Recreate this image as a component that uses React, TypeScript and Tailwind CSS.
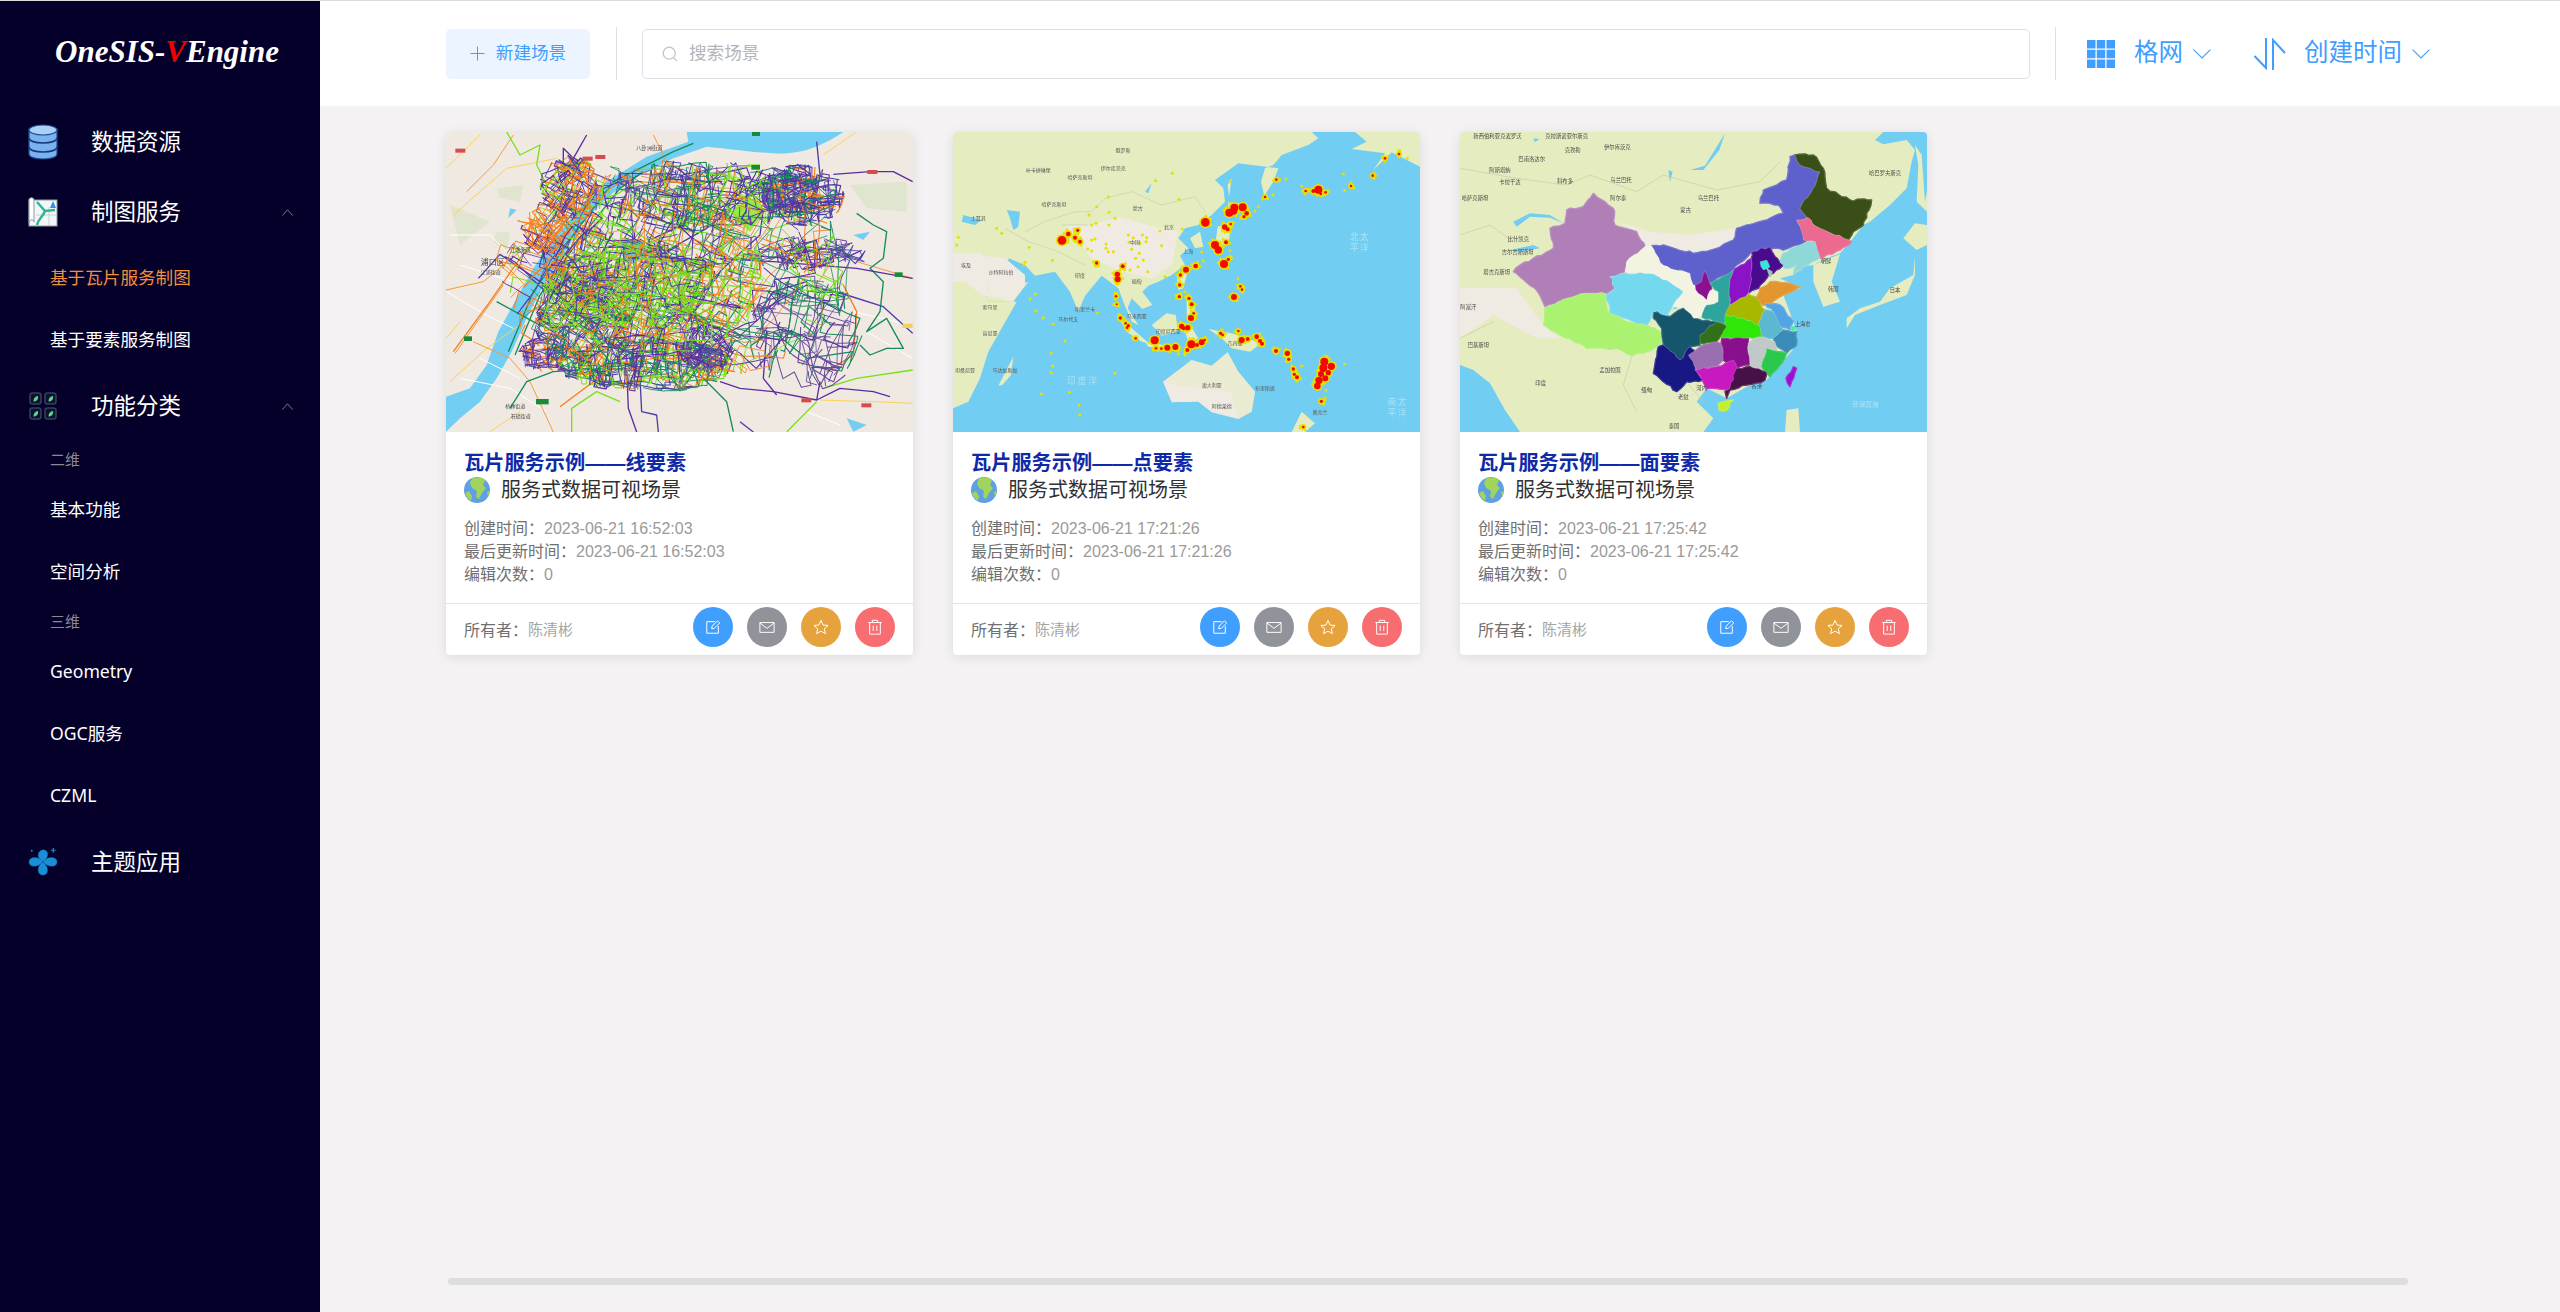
import type {ReactNode} from "react";

// seeded so the maps come out the same on every run
function makeRandom(seed: number) {
    let s = seed;
    return () => {
        s |= 0;
        s = (s + 0x6d2b79f5) | 0;
        let t = Math.imul(s ^ (s >>> 15), 1 | s);
        t = (t + Math.imul(t ^ (t >>> 7), 61 | t)) ^ t;
        return ((t ^ (t >>> 14)) >>> 0) / 4294967296;
    };
}

type Cluster = { cx: number; cy: number; rx: number; ry: number; n: number; colors: string[]; angle: number; step: number };

const PURPLE = "#5a2ca0";
const INDIGO = "#4a3da8";
const ORANGE = "#f57f1f";
const LIME = "#78e01a";
const GREEN = "#178a5c";
const SLATE = "#6a4a9c";

const clusters: Cluster[] = [
    {cx: 1100, cy: 620, rx: 170, ry: 170, n: 44, colors: [PURPLE, SLATE, SLATE, SLATE, GREEN], angle: 0.2, step: 46},
    {cx: 1110, cy: 390, rx: 170, ry: 55, n: 24, colors: [INDIGO, SLATE, PURPLE], angle: -0.12, step: 50},
    {cx: 700, cy: 440, rx: 520, ry: 320, n: 180, colors: [INDIGO, PURPLE, GREEN, ORANGE, LIME], angle: 0.45, step: 60},
    {cx: 800, cy: 210, rx: 360, ry: 95, n: 120, colors: [INDIGO, PURPLE, ORANGE, LIME, GREEN], angle: 0.08, step: 34},
    {cx: 1090, cy: 210, rx: 120, ry: 90, n: 70, colors: [INDIGO, PURPLE, INDIGO, GREEN, ORANGE], angle: 0, step: 28},
    {cx: 390, cy: 190, rx: 90, ry: 95, n: 60, colors: [PURPLE, ORANGE, INDIGO, LIME], angle: 0.5, step: 28},
    {cx: 320, cy: 320, rx: 75, ry: 75, n: 30, colors: [ORANGE, ORANGE, PURPLE], angle: 0.7, step: 30},
    {cx: 620, cy: 720, rx: 260, ry: 80, n: 120, colors: [ORANGE, PURPLE, INDIGO, GREEN, LIME], angle: 0, step: 30},
    {cx: 310, cy: 690, rx: 75, ry: 50, n: 30, colors: [PURPLE, ORANGE, INDIGO], angle: 0, step: 22},
    {cx: 800, cy: 670, rx: 80, ry: 70, n: 36, colors: [INDIGO, PURPLE, SLATE], angle: 0.6, step: 22},
    {cx: 430, cy: 580, rx: 140, ry: 180, n: 120, colors: [INDIGO, PURPLE, ORANGE, LIME, GREEN], angle: 0.75, step: 26},
    {cx: 650, cy: 450, rx: 320, ry: 230, n: 190, colors: [LIME, LIME, ORANGE, ORANGE, PURPLE, INDIGO, GREEN], angle: 0.3, step: 36},
    {cx: 620, cy: 480, rx: 220, ry: 130, n: 110, colors: [LIME, LIME, LIME, ORANGE, INDIGO], angle: 0.1, step: 24},
];

function buildLines() {
    const rand = makeRandom(42);
    const lines: { d: string; color: string; width: number }[] = [];
    clusters.forEach((c) => {
        for (let i = 0; i < c.n; i++) {
            const a = rand() * Math.PI * 2;
            const r = Math.sqrt(rand());
            let x = c.cx + Math.cos(a) * r * c.rx;
            let y = c.cy + Math.sin(a) * r * c.ry;
            let heading = c.angle + Math.floor(rand() * 4) * (Math.PI / 2);
            let d = `M${x.toFixed(0)},${y.toFixed(0)}`;
            const steps = 5 + Math.floor(rand() * 10);
            for (let j = 0; j < steps; j++) {
                if (rand() < 0.3) heading += (rand() < 0.5 ? 1 : -1) * (Math.PI / 2);
                heading += (rand() - 0.5) * 0.5;
                const len = 8 + rand() * c.step;
                const nx = x + Math.cos(heading) * len;
                const ny = y + Math.sin(heading) * len;
                const ex = (nx - c.cx) / c.rx;
                const ey = (ny - c.cy) / c.ry;
                if (ex * ex + ey * ey > 1.1) {
                    heading += Math.PI;
                    continue;
                }
                x = nx;
                y = ny;
                d += ` L${x.toFixed(0)},${y.toFixed(0)}`;
            }
            lines.push({d, color: c.colors[Math.floor(rand() * c.colors.length)], width: 2.2 + rand() * 1.4});
        }
    });
    return lines;
}

const busLines = buildLines();

const longLines: [string, string][] = [
    ["M115,460 L180,388 L330,490 L420,560", INDIGO],
    ["M1180,148 L1290,140 L1360,140 L1418,170", PURPLE],
    ["M1250,265 L1300,300 L1340,320 L1330,400 L1290,430 L1330,470 L1320,560 L1280,620 L1340,580 L1390,670 L1340,670 L1290,690 L1260,660", GREEN],
    ["M205,680 L280,500 L400,330 L520,170 L700,80 L760,55", GREEN],
    ["M225,690 L300,510 L420,340 L540,190 L610,140", GREEN],
    ["M170,530 L280,590 L340,620", GREEN],
    ["M40,680 L150,530 L240,400 L300,330", ORANGE],
    ["M360,845 L460,770 L560,690 L720,600 L900,500", ORANGE],
    ["M210,850 L260,770 L340,740 L500,730", GREEN],
    ["M560,730 L565,850 L590,921", PURPLE],
    ["M600,760 L605,860 L650,870 L655,921", INDIGO],
    ["M840,770 L900,790 L1000,800 L1130,825 L1140,770", PURPLE],
    ["M1130,825 L1200,790 L1300,800 L1350,815", PURPLE],
    ["M1150,790 L1250,760 L1418,735", LIME],
    ["M1040,921 L1130,830", LIME],
    ["M960,560 L1100,480 L1220,510 L1330,545 L1418,625", INDIGO],
    ["M840,400 L1000,410 L1250,430 L1418,460", PURPLE],
    ["M640,400 L800,310 L960,180 L1110,150", INDIGO],
    ["M640,340 L900,220 L1130,160", PURPLE],
    ["M970,250 L960,330 L850,430 L700,590 L520,720", INDIGO],
    ["M880,920 L860,830 L790,760 L710,670", GREEN],
    ["M900,890 L940,921", INDIGO],
    ["M440,30 L400,100 L370,70 L370,130", PURPLE],
    ["M200,21 L240,90 L300,60 L290,120 L320,180", LIME],
    ["M1130,50 L1140,150 L1120,260", INDIGO],
    ["M395,921 L395,850 L470,800 L540,830", LIME],
    ["M980,620 L970,760 L1010,810", PURPLE],
    ["M1160,740 L1240,690 L1250,560 L1210,480", ORANGE],
    ["M960,560 L1000,500 L1100,470", PURPLE],
    ["M1000,620 L1100,700 L1240,680", GREEN],
];

const heatBig: [number, number, number][] = [
    [351, 346, 12], [370, 327, 6], [398, 316, 4], [390, 338, 5], [405, 350, 5], [517, 448, 7], [518, 463, 8], [533, 424, 5],
    [455, 414, 4], [781, 292, 12], [853, 263, 11], [868, 248, 11], [866, 258, 10], [893, 247, 11], [905, 265, 6], [897, 275, 4],
    [839, 306, 7], [848, 313, 5], [857, 297, 3], [843, 352, 5], [810, 360, 11], [820, 375, 10], [837, 417, 11], [850, 403, 4],
    [723, 434, 8], [752, 423, 6], [706, 450, 4], [704, 480, 4], [703, 515, 4], [732, 520, 4], [740, 538, 5], [738, 579, 8],
    [746, 565, 3], [710, 604, 7], [728, 608, 7], [716, 610, 5], [867, 516, 8], [886, 484, 3], [891, 494, 3], [526, 579, 4],
    [542, 595, 3], [550, 602, 4], [546, 608, 3], [572, 640, 3], [629, 646, 11], [667, 668, 8], [691, 666, 8], [649, 671, 3],
    [633, 670, 3], [727, 675, 5], [739, 658, 11], [756, 660, 5], [770, 652, 8], [779, 645, 3], [827, 625, 4], [833, 630, 3],
    [880, 618, 3], [890, 645, 8], [908, 642, 5], [935, 635, 6], [945, 648, 5], [951, 656, 5], [993, 678, 5], [1027, 685, 7],
    [1031, 703, 4], [1045, 732, 4], [1048, 748, 4], [1056, 757, 5], [1138, 710, 11], [1135, 729, 11], [1159, 724, 10], [1128, 747, 8],
    [1150, 743, 7], [1141, 760, 8], [1122, 766, 10], [1117, 783, 9], [1129, 829, 4], [1120, 194, 11], [1105, 198, 5], [1082, 198, 3],
    [1127, 207, 3], [1142, 202, 3], [1283, 152, 3], [1218, 183, 3], [1320, 100, 3], [1362, 87, 3], [994, 164, 3], [960, 216, 3],
    [513, 514, 3], [515, 538, 2], [1075, 906, 3],
];

const heatSmall: [number, number][] = [
    [682, 145], [632, 167], [855, 170], [1023, 162], [1070, 183], [1195, 147], [1199, 196], [1387, 100], [940, 245], [984, 210],
    [490, 216], [455, 245], [432, 270], [492, 262], [510, 280], [440, 300], [453, 295], [492, 300], [550, 330], [565, 338], [592, 330],
    [605, 338], [552, 352], [603, 350], [585, 355], [483, 357], [440, 345], [450, 342], [428, 372], [440, 378], [483, 370], [505, 380],
    [490, 380], [560, 373], [572, 400], [583, 385], [595, 405], [579, 425], [555, 435], [608, 440], [525, 435], [660, 455], [650, 362],
    [645, 318], [702, 223], [712, 312], [252, 367], [240, 412], [236, 420], [155, 310], [170, 325], [40, 337], [35, 360], [322, 406],
    [271, 507], [255, 522], [272, 558], [295, 578], [325, 597], [360, 648], [319, 684], [323, 723], [319, 743], [510, 745], [289, 807],
    [374, 802], [402, 841], [404, 870], [458, 563], [720, 500], [700, 687], [720, 690], [1199, 718], [1070, 723], [1143, 796], [1141, 818],
    [879, 462], [855, 377], [775, 408], [770, 380], [930, 258],
];

function buildHalo() {
    const rand = makeRandom(7);
    const dots: [number, number][] = [];
    heatBig.forEach(([x, y, r]) => {
        for (let i = 0; i < 3; i++) {
            const a = rand() * Math.PI * 2;
            dots.push([x + Math.cos(a) * (r + 7), y + Math.sin(a) * (r + 7)]);
        }
    });
    return dots;
}

const heatHalo = buildHalo();

const mapTwoLabels: [number, number, string][] = [
    [534, 80, "俄罗斯"], [280, 140, "叶卡捷琳堡"], [505, 135, "伊尔库茨克"], [405, 162, "哈萨克斯坦"], [327, 243, "哈萨克斯坦"],
    [578, 256, "蒙古"], [570, 356, "中国"], [672, 312, "北京"], [730, 385, "上海"], [405, 457, "印度"], [63, 425, "埃及"],
    [168, 448, "沙特阿拉伯"], [575, 473, "缅甸"], [420, 558, "斯里兰卡"], [370, 587, "马尔代夫"], [575, 578, "马来西亚"],
    [670, 625, "印度尼西亚"], [870, 660, "几内亚"], [800, 786, "澳大利亚"], [960, 794, "布里斯班"], [830, 850, "阿德莱德"],
    [1125, 868, "奥克兰"], [135, 552, "索马里"], [180, 740, "马达加斯加"], [60, 740, "坦桑尼亚"], [135, 630, "肯尼亚"], [100, 285, "土耳其"],
];

const provinces: [string, string][] = [
    ["#b07fb8", "430,205 490,250 495,300 560,320 585,365 530,410 525,440 480,455 495,490 470,505 410,505 350,520 285,545 255,490 190,440 210,420 310,370 300,310 345,295 350,255 400,245"],
    ["#aaf26f", "285,550 350,520 410,505 465,505 470,555 530,590 590,600 630,620 635,655 590,680 540,690 500,670 410,670 330,630 280,600"],
    ["#74d9ee", "480,455 525,445 600,445 650,465 700,500 690,545 665,550 650,580 620,555 590,600 540,585 480,565 470,510 495,490"],
    ["#f3f3e2", "585,365 605,362 640,420 720,445 735,480 770,490 805,500 805,530 770,540 755,575 730,580 700,545 665,550 700,500 650,465 600,445 525,440 530,410"],
    ["#5e60cc", "605,362 640,360 730,385 800,370 850,345 860,310 950,285 1000,265 985,240 930,235 940,195 1010,165 1020,95 1035,90 1050,120 1110,140 1090,190 1050,250 1070,280 1040,285 1070,350 1000,375 970,370 905,380 850,435 790,470 730,480 720,445 640,420"],
    ["#3a4f17", "1035,90 1090,90 1120,130 1130,190 1200,225 1265,225 1240,300 1210,320 1195,345 1100,305 1070,275 1050,250 1090,190 1110,140 1050,120"],
    ["#ec6a90", "1040,285 1075,278 1100,305 1195,345 1205,350 1170,375 1110,400 1095,350 1060,345"],
    ["#8ed8d8", "1000,385 1070,350 1095,350 1108,400 1060,425 1030,450 1040,420 1005,430 990,410"],
    ["#4a0a8e", "905,380 960,365 975,395 1000,420 970,445 950,460 925,490 895,505 905,430"],
    ["#8b12c6", "850,435 905,400 905,430 895,505 840,540 838,480"],
    ["#8b1190", "765,437 785,490 770,525 745,505 735,480 755,470"],
    ["#2da49c", "850,435 838,480 838,540 848,570 820,595 755,575 770,540 805,530 805,500 780,475"],
    ["#e39530", "960,470 1020,475 1050,485 1000,510 950,540 915,535 930,490"],
    ["#a8b800", "895,505 915,515 945,555 925,600 880,580 825,570 840,540"],
    ["#52a4e4", "945,535 990,540 1030,590 1020,615 985,600 970,560"],
    ["#5cb8d0", "945,555 970,560 1000,615 970,640 930,630 925,600"],
    ["#3a8cb8", "1000,615 1040,620 1040,660 1010,685 975,660 970,640"],
    ["#30e608", "825,570 880,580 925,600 935,635 870,640 820,640 800,620 830,605"],
    ["#2f7019", "800,590 830,605 800,650 750,655 750,630"],
    ["#16566c", "610,560 660,575 700,550 730,580 800,590 750,630 750,660 720,665 690,705 640,660 635,610 610,580"],
    ["#181884", "625,665 640,660 690,705 720,665 745,690 735,735 760,765 710,770 680,800 640,770 610,745"],
    ["#9a6eb0", "715,690 750,665 790,650 815,660 820,705 800,725 740,735"],
    ["#88108c", "815,640 895,640 900,720 860,730 820,705"],
    ["#c0c8c8", "895,655 925,635 975,650 980,670 940,700 930,740 900,720"],
    ["#2cc84e", "950,670 1010,685 990,720 960,755 935,725"],
    ["#c818c0", "735,735 800,725 850,705 865,740 840,795 770,790 750,750"],
    ["#481048", "860,730 900,725 950,740 945,765 890,780 840,795 830,820 825,800 840,790"],
    ["#2fe8d8", "930,410 950,405 960,425 940,435"],
    ["#90c8a8", "950,430 968,440 960,455"],
    ["#4ae8a8", "1020,605 1038,605 1030,620"],
    ["#c0f030", "805,835 850,825 830,855 808,855"],
    ["#9a10d0", "1030,725 1040,730 1020,785 1008,760"],
];

// jagged borders: the offset depends only on the place, so neighbours keep a shared edge
function jag(points: string) {
    const pts = points.split(" ").map((p) => p.split(",").map(Number));
    const out: string[] = [];
    pts.forEach(([x, y], i) => {
        const [nx, ny] = pts[(i + 1) % pts.length];
        const len = Math.hypot(nx - x, ny - y);
        const parts = Math.max(1, Math.round(len / 14));
        for (let k = 0; k < parts; k++) {
            const px = x + ((nx - x) * k) / parts;
            const py = y + ((ny - y) * k) / parts;
            const h = Math.sin(px * 12.9898 + py * 78.233) * 43758.5453;
            const h2 = Math.sin(px * 39.346 + py * 11.135) * 24634.6345;
            const dx = k === 0 ? 0 : ((h - Math.floor(h)) - 0.5) * 7;
            const dy = k === 0 ? 0 : ((h2 - Math.floor(h2)) - 0.5) * 7;
            out.push(`${(px + dx).toFixed(1)},${(py + dy).toFixed(1)}`);
        }
    });
    return out.join(" ");
}

const mapThreeLabels: [number, number, string][] = [
    [110, 40, "新西伯利亚"], [183, 40, "克麦罗沃"], [350, 40, "克拉斯诺亚尔斯克"], [368, 82, "克孜勒"], [502, 72, "伊尔库茨克"],
    [150, 140, "阿斯塔纳"], [245, 108, "巴甫洛达尔"], [180, 177, "卡拉干达"], [345, 173, "科布多"], [513, 172, "乌兰巴托"],
    [75, 225, "哈萨克斯坦"], [505, 225, "阿尔泰"], [775, 225, "乌兰巴托"], [707, 260, "蒙古"], [205, 348, "比什凯克"],
    [203, 387, "吉尔吉斯斯坦"], [140, 447, "塔吉克斯坦"], [55, 553, "阿富汗"], [85, 666, "巴基斯坦"], [272, 780, "印度"],
    [480, 740, "孟加拉国"], [590, 800, "缅甸"], [700, 822, "老挝"], [672, 908, "泰国"], [1335, 500, "日本"], [1150, 497, "韩国"],
    [1128, 413, "朝鲜"], [1058, 602, "上海市"], [1305, 150, "哈巴罗夫斯克"], [920, 790, "香港"], [755, 795, "河内"],
];

function MapFrame({viewBox, bg, children}: { viewBox: string; bg: string; children: ReactNode }) {
    return (
        <svg viewBox={viewBox} preserveAspectRatio="none" className="block w-full h-full blur-[0.5px]" style={{background: bg}}>
            {children}
        </svg>
    );
}

function MapOne() {
    return (
        <MapFrame viewBox="18 21 1401 900" bg="#efe9e2">
            <path d="M170,190 L250,180 L240,230 L180,220 Z M30,240 L150,290 L60,360 Z M1230,180 L1400,170 L1400,260 L1280,250 Z M170,320 L210,320 L200,380 L160,350 Z" fill="#dfe5cf"/>
            <path d="M740,21 L1210,21 C1150,60 1090,90 1000,85 C920,80 860,70 800,65 L700,100 L600,150 L510,210 L430,290 L370,390 L300,500 L260,580 L215,680 L170,760 L120,830 L60,880 L18,920 L18,815 L90,790 L140,720 L175,620 L230,520 L280,430 L340,340 L420,250 L500,170 L620,95 L745,50 Z" fill="#72cef2"/>
            <path d="M540,340 L600,345 L610,400 L570,420 L545,390 Z M1240,330 L1290,320 L1270,345 Z M480,480 L500,490 L490,520 Z M1220,880 L1280,900 L1240,920 Z M210,250 L230,255 L205,280 Z" fill="#72cef2"/>
            <g fill="none" stroke="#fff" strokeWidth="3">
                <path d="M30,330 L150,330 L220,400 M20,500 L120,560 L220,610 M60,760 L210,790 L320,860 M1240,560 L1410,600 M1280,620 L1418,700 M1100,860 L1200,900 M60,420 L220,470 M120,700 L240,760"/>
            </g>
            <g fill="none" stroke="#f9d35b" strokeWidth="3">
                <path d="M18,130 L120,30 M40,270 L200,130 L350,100 M18,640 L60,590 M30,770 L140,670 L240,600 M1140,825 L1300,830 L1418,835 M150,920 L240,860 M1150,90 L1250,20"/>
            </g>
            <g fill="none" stroke="#f79a3c" strokeWidth="3">
                <path d="M18,495 L130,470 L240,380 M45,685 L190,480 M100,650 L210,700 L270,770 L340,921 M80,200 L160,120 L220,30 M640,30 L690,130 M1250,410 L1418,460"/>
            </g>
            <path d="M880,250 L950,215 L975,260 L930,320 L880,280 Z" fill="#86e61a" opacity="0.75"/>
            {longLines.map(([d, color], i) => (
                <path key={i} d={d} fill="none" stroke={color} strokeWidth="4" strokeLinejoin="round"/>
            ))}
            {busLines.map((l, i) => (
                <path key={i} d={l.d} fill="none" stroke={l.color} strokeWidth={l.width} strokeLinejoin="round"/>
            ))}
            <g fill="#444" fontFamily="'Noto Sans CJK SC',sans-serif">
                <text x="122" y="420" fontSize="24">浦口区</text>
                <text x="210" y="380" fontSize="16">江北新区</text>
                <text x="588" y="76" fontSize="16">八卦洲街道</text>
                <text x="122" y="446" fontSize="15">江浦街道</text>
                <text x="196" y="850" fontSize="15">桥林街道</text>
                <text x="212" y="880" fontSize="15">石碛街道</text>
            </g>
            <g fill="#d94a50">
                <rect x="46" y="71" width="30" height="12"/><rect x="428" y="95" width="30" height="12"/><rect x="466" y="90" width="30" height="12"/>
                <rect x="1282" y="135" width="30" height="12"/><rect x="1084" y="820" width="30" height="12"/><rect x="1264" y="835" width="30" height="12"/>
            </g>
            <g fill="#198a3a">
                <rect x="936" y="21" width="24" height="12"/><rect x="934" y="120" width="26" height="14"/><rect x="72" y="634" width="24" height="14"/>
                <rect x="288" y="822" width="38" height="16"/><rect x="1364" y="442" width="24" height="14"/>
            </g>
            <rect x="1388" y="596" width="30" height="13" fill="#efd25a"/>
        </MapFrame>
    );
}

function MapTwo() {
    return (
        <MapFrame viewBox="24 21 1401 900" bg="#72cdf2">
            <polygon points="24,21 1100,21 1120,40 1090,60 1010,90 985,120 960,130 948,170 958,212 985,170 1000,130 880,115 810,165 835,190 840,230 800,270 760,300 720,310 700,340 730,370 705,392 720,420 680,450 640,470 610,482 592,500 622,540 592,552 560,520 548,550 580,600 560,590 535,530 520,490 470,452 420,512 400,560 375,500 330,440 270,452 240,420 192,400 172,440 222,480 250,470 205,530 130,530 80,400 24,390" fill="#e5ecc0"/>
            <polygon points="24,400 80,400 130,530 215,530 130,680 105,760 70,830 24,850" fill="#e5ecc0"/>
            <polygon points="1230,21 1425,21 1425,125 1340,82 1285,135 1320,85 1220,72 1265,50" fill="#e5ecc0"/>
            <polygon points="440,300 520,275 630,305 700,320 680,420 620,460 530,440 440,400 360,300" fill="#efeae2"/>
            <polygon points="24,385 110,385 130,500 215,490 170,520 110,510 60,470 24,470" fill="#efeae2"/>
            <polygon points="90,390 180,400 240,450 240,480 200,530 140,510" fill="#efeae2"/>
            <polygon points="654,770 740,705 800,722 848,682 880,740 930,800 920,860 880,882 800,862 760,830 680,832" fill="#efeae2"/>
            <path d="M654,770 L740,705 L800,722 L848,682 L880,740 L930,800 L920,860 L880,882 L860,800 L700,780 Z" fill="#e5ecc0" opacity="0.5"/>
            <g fill="#e5ecc0">
                <polygon points="160,782 205,695 198,750 172,780"/>
                <polygon points="620,600 665,565 692,570 700,620 650,632"/>
                <polygon points="520,575 560,610 612,655 590,650 545,620"/>
                <polygon points="600,650 700,668 700,676 610,665"/>
                <polygon points="700,612 735,600 760,640 730,650 722,625"/>
                <polygon points="790,612 860,625 950,655 915,680 860,670 830,640"/>
                <polygon points="735,340 765,320 775,365 750,370"/>
                <polygon points="818,305 860,290 850,360 810,362"/>
                <polygon points="850,230 890,240 870,265 850,260"/>
                <polygon points="695,450 730,430 715,490 700,495"/>
                <polygon points="725,520 750,540 745,590 725,570"/>
                <polygon points="1070,860 1110,895 1080,921 1040,921"/>
                <polygon points="860,160 852,215 848,180"/>
            </g>
            <polygon points="55,270 110,285 90,300 50,290" fill="#72cdf2"/>
            <polygon points="185,255 225,260 220,305 205,315 195,280" fill="#72cdf2"/>
            <polygon points="600,200 620,175 610,205" fill="#72cdf2"/>
            <g fill="none" stroke="#c9cfb0" strokeWidth="2">
                <path d="M240,320 L300,290 L390,260 L440,260 L480,220 L560,200 L650,240 L750,215 L780,260 M180,310 L250,350 L340,380 L420,420 M350,300 L430,300"/>
            </g>
            {heatSmall.map(([x, y], i) => (
                <circle key={i} cx={x} cy={y} r="4.5" fill="#e6e000"/>
            ))}
            {heatHalo.map(([x, y], i) => (
                <circle key={i} cx={x} cy={y} r="4" fill="#e6e000"/>
            ))}
            {heatBig.map(([x, y, r], i) => (
                <circle key={i} cx={x} cy={y} r={r + 6} fill="#e6e000"/>
            ))}
            {heatBig.map(([x, y, r], i) => (
                <circle key={i} cx={x} cy={y} r={r + 1} fill="#f20a00"/>
            ))}
            <g fontSize="15" fill="#555" fontFamily="'Noto Sans CJK SC',sans-serif" textAnchor="middle">
                {mapTwoLabels.map(([x, y, t]) => (
                    <text key={t + x} x={x} y={y}>{t}</text>
                ))}
            </g>
            <g fontSize="26" fill="#a9e2f5" fontFamily="'Noto Sans CJK SC',sans-serif" textAnchor="middle">
                <text x="414" y="778" letterSpacing="6">印度洋</text>
                <text x="1245" y="344" letterSpacing="4">北太</text>
                <text x="1245" y="378" letterSpacing="4">平洋</text>
                <text x="1358" y="840" letterSpacing="4">南太</text>
                <text x="1358" y="874" letterSpacing="4">平洋</text>
            </g>
        </MapFrame>
    );
}

function MapThree() {
    return (
        <MapFrame viewBox="30 21 1401 900" bg="#e5ecc0">
            <polygon points="1431,21 1300,21 1275,45 1300,58 1370,45 1395,75 1385,110 1370,190 1320,240 1260,290 1240,300 1205,345 1170,385 1130,400 1090,420 1060,425 1030,450 990,460 1050,490 1000,510 1030,590 1040,620 1040,660 990,720 950,765 890,785 830,820 770,790 740,830 790,880 760,921 1431,921" fill="#72cdf2"/>
            <polygon points="1090,420 1140,400 1170,388 1145,470 1170,530 1120,545 1090,470" fill="#e5ecc0"/>
            <polygon points="1431,300 1395,295 1360,340 1400,375 1431,360" fill="#e5ecc0"/>
            <polygon points="1395,60 1415,90 1425,230 1431,200 1431,260 1400,230 1405,120" fill="#e5ecc0"/>
            <polygon points="1395,395 1390,450 1320,490 1290,530 1230,550 1190,580 1190,610 1215,570 1290,540 1370,510 1395,450" fill="#e5ecc0"/>
            <polygon points="1010,855 1045,850 1050,921 1005,921" fill="#e5ecc0"/>
            <polygon points="30,720 70,735 120,775 165,855 210,921 30,921" fill="#72cdf2"/>
            <polygon points="490,285 600,320 720,330 850,310 860,345 800,370 730,385 640,360 585,365 560,320" fill="#efeae2"/>
            <polygon points="30,490 200,490 280,600 330,640 260,640 130,570 30,640" fill="#efeae2"/>
            <g fill="#72cdf2">
                <path d="M190,290 L240,265 L300,270 L340,295 L300,278 L240,275 L200,305 Z"/>
                <path d="M720,135 L765,122 L825,25 L808,75 L760,135 Z"/>
                <path d="M180,375 L250,360 L270,370 L210,380 Z"/>
                <path d="M655,135 L668,140 L660,170 Z M250,40 L268,42 L255,52 Z"/>
            </g>
            <g fill="none" stroke="#c5cca4" strokeWidth="2">
                <path d="M30,130 L200,160 L350,180 L420,150 L560,200 L640,150 L800,195 L930,170 L990,110 M30,330 L120,300 L190,350 M550,680 L520,780 L560,860 M700,760 L760,830 M30,640 L130,590"/>
            </g>
            {provinces.map(([fill, points]) => (
                <polygon key={`base${points}`} points={jag(points)} fill={fill} stroke={fill} strokeWidth="4" strokeLinejoin="round"/>
            ))}
            {provinces.map(([fill, points]) => (
                <polygon key={points} points={jag(points)} fill={fill} stroke="#f2f2ea" strokeOpacity="0.6" strokeWidth="1"/>
            ))}
            <g fontSize="16" fill="#444" fontFamily="'Noto Sans CJK SC',sans-serif" textAnchor="middle">
                {mapThreeLabels.map(([x, y, t]) => (
                    <text key={t + x} x={x} y={y}>{t}</text>
                ))}
            </g>
            <text x="1246" y="846" fontSize="20" fill="#a9e2f5" textAnchor="middle" fontFamily="'Noto Sans CJK SC',sans-serif">菲律宾海</text>
        </MapFrame>
    );
}

function DbIcon() {
    return (
        <svg viewBox="0 0 30 36" className="w-[30px] h-[36px]">
            <path d="M1,5 V30 C1,33 7,35 15,35 C23,35 29,33 29,30 V5 Z" fill="#79b2ee" stroke="#1f4a8c" strokeWidth="1.2"/>
            <ellipse cx="15" cy="6" rx="14" ry="5" fill="#a9d0f7" stroke="#1f4a8c" strokeWidth="1.2"/>
            <path d="M1,14 C1,17 7,19 15,19 C23,19 29,17 29,14" fill="none" stroke="#173a78" strokeWidth="1.6"/>
            <path d="M1,23 C1,26 7,28 15,28 C23,28 29,26 29,23" fill="none" stroke="#173a78" strokeWidth="1.6"/>
        </svg>
    );
}

function MapIcon() {
    return (
        <svg viewBox="0 0 30 30" className="w-[30px] h-[30px]">
            <rect x="1" y="3" width="28" height="26" fill="#f3f6f6" stroke="#8a9ba5"/>
            <path d="M1,3 C1,0 6,0 6,3 V25 C6,22 1,22 1,26 Z" fill="#fff" stroke="#8a9ba5"/>
            <path d="M8,18 H28 M21,10 V28" stroke="#c8d4d8" strokeWidth="1"/>
            <path d="M9,5 L17,14 L27,13 M17,14 C15,20 10,22 9,28" fill="none" stroke="#2fb39a" strokeWidth="2.4"/>
            <path d="M22,11 L25,4 L28,11 Z" fill="#2f8fe8"/>
        </svg>
    );
}

function TilesIcon() {
    return (
        <svg viewBox="0 0 28 28" className="w-[28px] h-[28px]">
            {[[1, 1], [16, 1], [1, 16], [16, 16]].map(([x, y]) => (
                <g key={x * 100 + y}>
                    <rect x={x} y={y} width="11" height="11" rx="2.5" fill="#101030" stroke="#33405a" strokeWidth="1.6"/>
                    <path d={`M${x + 3.5},${y + 8.5} C${x + 3.5},${y + 5} ${x + 5},${y + 3.5} ${x + 8},${y + 3} C${x + 8.5},${y + 6} ${x + 7},${y + 8.5} ${x + 3.5},${y + 8.5} Z`} fill="#56d98c"/>
                </g>
            ))}
        </svg>
    );
}

function FlowerIcon() {
    return (
        <svg viewBox="0 0 32 30" className="w-[32px] h-[30px]">
            <g fill="#1a8ed6" stroke="#0d5fa0" strokeWidth="0.5">
                <path d="M16,15 C8,11 10,2 17,2 C23,3 22,11 16,15 Z"/>
                <path d="M16,15 C9,19 9,29 16,29 C23,29 22,19 16,15 Z"/>
                <path d="M16,15 C11,8 1,9 1,15 C1,21 11,21 16,15 Z"/>
                <path d="M16,15 C21,8 31,9 31,15 C31,21 21,21 16,15 Z"/>
            </g>
            <path d="M27,0 V5 M24.5,2.5 H29.5" stroke="#1a8ed6" strokeWidth="1.2"/>
            <circle cx="4" cy="3" r="1" fill="#1a8ed6"/>
        </svg>
    );
}

function EarthIcon() {
    return (
        <svg viewBox="0 0 26 26" className="w-[26px] h-[26px] shrink-0">
            <circle cx="13" cy="13" r="13" fill="#5f9fe3"/>
            <path d="M8,1.5 C12,0 18,0 21,3 L19,8 L22,11 L18,16 L15,22 L12,20 L13,14 L8,11 L6,6 Z" fill="#a0d45c"/>
            <path d="M1,16 L5,14 L8,19 L7,24 C4,22 2,19 1,16 Z" fill="#a0d45c"/>
            <path d="M23,15 L26,14 L24,20 Z" fill="#a0d45c"/>
        </svg>
    );
}

function Chevron({className, up}: { className: string; up?: boolean }) {
    return (
        <svg viewBox="0 0 16 9" preserveAspectRatio="none" className={className} fill="none" stroke="currentColor" strokeWidth="1">
            <path d={up ? "M0.5,8.5 L8,1 L15.5,8.5" : "M0.5,0.5 L8,8 L15.5,0.5"}/>
        </svg>
    );
}

function MenuTitle({icon, label, open}: { icon: ReactNode; label: string; open?: boolean }) {
    return (
        <div className="h-[70px] flex items-center relative text-white">
            <div className="w-[30px] ml-[28px] mr-[33px] shrink-0 flex justify-center">{icon}</div>
            <span className="text-[22.5px] pt-[2px]">{label}</span>
            {open && <Chevron up className="absolute left-[282px] top-[32px] w-[11px] h-[7px] text-[#a0a0b0]"/>}
        </div>
    );
}

function MenuItem({label, active}: { label: string; active?: boolean }) {
    return (
        <div className={`h-[62px] flex items-center pl-[50px] text-[17.6px] pb-[1px] font-['Noto_Sans','Noto_Sans_CJK_SC',sans-serif] ${active ? "text-[#f0903c]" : "text-white"}`}>
            {label}
        </div>
    );
}

function MenuGroup({label}: { label: string }) {
    return <div className="h-[38px] flex items-center pl-[50px] text-[15px] text-[#8a8a96]">{label}</div>;
}

function Sidebar() {
    return (
        <aside className="w-[320px] shrink-0 bg-[#05002a] flex flex-col">
            <div className="h-[106px] flex items-center pl-[55px] font-['Liberation_Serif',serif] italic font-bold text-[31px] text-white leading-none pb-[5px] whitespace-nowrap">
                <span>OneSIS-</span><span className="text-[#f00000]">V</span><span>Engine</span>
            </div>
            <MenuTitle icon={<DbIcon/>} label="数据资源"/>
            <MenuTitle icon={<MapIcon/>} label="制图服务" open/>
            <MenuItem label="基于瓦片服务制图" active/>
            <MenuItem label="基于要素服务制图"/>
            <MenuTitle icon={<TilesIcon/>} label="功能分类" open/>
            <MenuGroup label="二维"/>
            <MenuItem label="基本功能"/>
            <MenuItem label="空间分析"/>
            <MenuGroup label="三维"/>
            <MenuItem label="Geometry"/>
            <MenuItem label="OGC服务"/>
            <MenuItem label="CZML"/>
            <MenuTitle icon={<FlowerIcon/>} label="主题应用"/>
        </aside>
    );
}

function Toolbar() {
    return (
        <header className="h-[105px] bg-white flex items-center pl-[126px] shrink-0">
            <button className="w-[144px] h-[50px] rounded-[5px] bg-[#ecf5ff] text-[#409eff] text-[17.6px] flex items-center justify-center gap-[11px]">
                <svg viewBox="0 0 15 15" className="w-[15px] h-[15px]" fill="none" stroke="currentColor" strokeWidth="1">
                    <path d="M7.5,0.5 V14.5 M0.5,7.5 H14.5"/>
                </svg>
                新建场景
            </button>
            <div className="w-px h-[53px] bg-[#dcdfe6] ml-[26px]"/>
            <div className="w-[1388px] h-[50px] ml-[25px] border-[1.5px] border-[#dcdfe6] rounded-[5px] flex items-center pl-[19px] gap-[11px] text-[#b4b4bb] text-[17.6px]">
                <svg viewBox="0 0 16 16" className="w-[16px] h-[16px]" fill="none" stroke="#c0c4cc" strokeWidth="1.2">
                    <circle cx="7.2" cy="7.2" r="6"/>
                    <path d="M11.6,11.6 L15,15"/>
                </svg>
                搜索场景
            </div>
            <div className="w-px h-[53px] bg-[#dcdfe6] ml-[25px]"/>
            <div className="ml-[31px] flex items-center text-[#409eff]">
                <svg viewBox="0 0 28 28" className="w-[28px] h-[28px]" fill="currentColor">
                    {[0, 9.75, 19.5].map((x) =>
                        [0, 9.75, 19.5].map((y) => <rect key={`${x}-${y}`} x={x} y={y} width="8.5" height="8.5"/>)
                    )}
                </svg>
                <span className="ml-[19px] text-[24.5px]">格网</span>
                <Chevron className="ml-[10px] w-[18px] h-[10px]"/>
                <svg viewBox="0 0 32 32" className="ml-[43px] w-[32px] h-[32px]" fill="none" stroke="currentColor" strokeWidth="2">
                    <path d="M12,0 V30 L0.5,18"/>
                    <path d="M19,32 V2 L31,15"/>
                </svg>
                <span className="ml-[18px] text-[24.5px]">创建时间</span>
                <Chevron className="ml-[10px] w-[18px] h-[10px]"/>
            </div>
        </header>
    );
}

const cardIcons: { color: string; path: ReactNode }[] = [
    {color: "bg-[#409eff]", path: <path d="M11,3 H2 V16 H15 V8 M7.5,11 L8,8 L14,2 L16.5,4.5 L10.5,10.5 Z"/>},
    {color: "bg-[#909399]", path: <path d="M1,4 H17 V15 H1 Z M1,4.5 L9,10.5 L17,4.5"/>},
    {color: "bg-[#e6a23c]", path: <path d="M9,1.5 L11.3,6.8 L17,7.3 L12.7,11 L14,16.5 L9,13.6 L4,16.5 L5.3,11 L1,7.3 L6.7,6.8 Z"/>},
    {color: "bg-[#f76d70]", path: <path d="M1.5,4 H16.5 M6,4 V1.5 H12 V4 M3,4 V17 H15 V4 M7,7.5 V13.5 M11,7.5 V13.5"/>},
];

type Scene = { title: string; created: string; map: ReactNode };

const scenes: Scene[] = [
    {title: "瓦片服务示例——线要素", created: "2023-06-21 16:52:03", map: <MapOne/>},
    {title: "瓦片服务示例——点要素", created: "2023-06-21 17:21:26", map: <MapTwo/>},
    {title: "瓦片服务示例——面要素", created: "2023-06-21 17:25:42", map: <MapThree/>},
];

function SceneCard({scene}: { scene: Scene }) {
    return (
        <div className="w-[467px] h-[523px] bg-white rounded-[4px] shadow-[0_2px_12px_rgba(0,0,0,0.1)] overflow-hidden flex flex-col">
            <div className="h-[300px] overflow-hidden">{scene.map}</div>
            <div className="flex-1 px-[18px] pt-[19px]">
                <div className="text-[20.2px] leading-[24px] font-bold text-[#0f2aa8]">{scene.title}</div>
                <div className="flex items-center gap-[11px] h-[28px] mt-[1px] text-[20px] text-[#303133]">
                    <EarthIcon/>
                    服务式数据可视场景
                </div>
                <div className="mt-[13px] text-[16px] leading-[23px] text-[#707070]">
                    <div>创建时间：<span className="text-[#9a9a9a]">{scene.created}</span></div>
                    <div>最后更新时间：<span className="text-[#9a9a9a]">{scene.created}</span></div>
                    <div>编辑次数：<span className="text-[#9a9a9a]">0</span></div>
                </div>
            </div>
            <div className="h-[52px] border-t-[1.5px] border-[#e2e2ea] flex items-center pl-[18px] pr-[18px]">
                <span className="text-[16px] text-[#707070] pt-[2px]">所有者：</span>
                <span className="text-[15px] text-[#a5a5a5] pt-[2px]">陈清彬</span>
                <div className="ml-auto flex gap-[14px] mt-[-6px]">
                    {cardIcons.map((b, i) => (
                        <div key={i} className={`w-[40px] h-[40px] rounded-full flex items-center justify-center ${b.color}`}>
                            <svg viewBox="0 0 18 18" className="w-[16px] h-[16px]" fill="none" stroke="white" strokeWidth="1.1">
                                {b.path}
                            </svg>
                        </div>
                    ))}
                </div>
            </div>
        </div>
    );
}

function App() {
    return (
        <div className="h-screen overflow-hidden flex flex-col bg-[#f4f2f3] font-['Liberation_Sans','Noto_Sans_CJK_SC',sans-serif]">
            <div className="h-px bg-[#dcdcdc] shrink-0"/>
            <div className="flex-1 flex min-h-0">
                <Sidebar/>
                <main className="flex-1 flex flex-col relative">
                    <Toolbar/>
                    <div className="flex gap-[40px] pl-[126px] pt-[26px]">
                        {scenes.map((s) => (
                            <SceneCard key={s.title} scene={s}/>
                        ))}
                    </div>
                    <div className="absolute left-[128px] bottom-[27px] w-[1960px] h-[7px] rounded-full bg-[#dddddd]"/>
                </main>
            </div>
        </div>
    );
}

export default App;
